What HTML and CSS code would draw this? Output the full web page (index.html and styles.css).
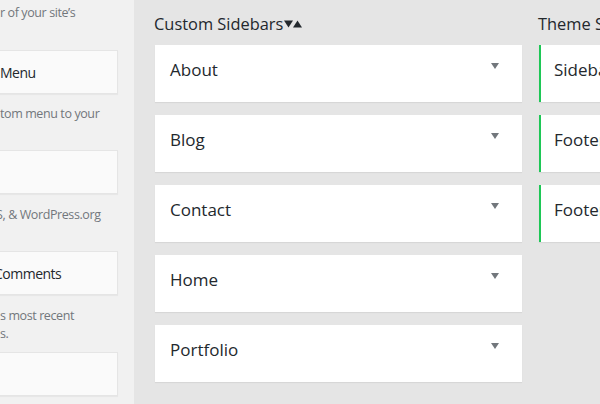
FILE: index.html
```html
<!DOCTYPE html>
<html>
<head>
<meta charset="utf-8">
<link rel="stylesheet" href="styles.css">
</head>
<body>
<div class="page">
  <aside class="avail">
    <p class="desc first">r of your site’s</p>
    <div class="wcard"><span>Menu</span></div>
    <p class="desc">tom menu to your</p>
    <div class="wcard"></div>
    <p class="desc tall"><span class="cut4">S, &amp; WordPress.org</span></p>
    <div class="wcard"><span class="cut5">Comments</span></div>
    <p class="desc tall">s most recent<br>s.</p>
    <div class="wcard"></div>
  </aside>
  <main class="main">
    <section class="col col-custom">
      <h2 class="col-title">Custom Sidebars<svg class="sort" width="18" height="8" viewBox="0 0 18 8"><path d="M0 0.5h9l-4.5 7z" fill="#23282d"/><path d="M9 7.5h9l-4.5-7z" fill="#23282d"/></svg></h2>
      <div class="sb"><span class="sb-name">About</span><span class="caret"></span></div>
      <div class="sb"><span class="sb-name">Blog</span><span class="caret"></span></div>
      <div class="sb"><span class="sb-name">Contact</span><span class="caret"></span></div>
      <div class="sb"><span class="sb-name">Home</span><span class="caret"></span></div>
      <div class="sb"><span class="sb-name">Portfolio</span><span class="caret"></span></div>
    </section>
    <section class="col col-theme">
      <h2 class="col-title">Theme Sidebars</h2>
      <div class="sb theme"><span class="sb-name">Sidebar</span></div>
      <div class="sb theme"><span class="sb-name">Footer 1</span></div>
      <div class="sb theme"><span class="sb-name">Footer 2</span></div>
    </section>
  </main>
</div>
</body>
</html>
```

FILE: styles.css
```css
html, body {
  margin: 0;
  padding: 0;
  background: #e5e5e5;
  font-family: "Open Sans", "Noto Sans", sans-serif;
  color: #23282d;
  overflow: hidden;
}
.page {
  display: flex;
  width: 600px;
  height: 404px;
  overflow: hidden;
}
.avail {
  width: 134px;
  flex: none;
  background: #f1f1f1;
  display: flex;
  flex-direction: column;
  overflow: hidden;
}
.desc {
  margin: 0;
  height: 56px;
  padding-top: 11px;
  box-sizing: border-box;
  font-size: 12.5px;
  letter-spacing: -0.4px;
  line-height: 18px;
  color: #72777c;
  white-space: nowrap;
}
.desc.tall {
  height: 57px;
  padding-top: 12px;
}
.desc.first {
  height: 50px;
  padding-top: 4px;
}
.wcard {
  width: 118px;
  height: 44px;
  box-sizing: border-box;
  flex: none;
  background: #fafafa;
  border: 1px solid #e5e5e5;
  border-left: none;
  box-shadow: 0 1px 1px rgba(0,0,0,0.04);
  display: flex;
  align-items: center;
  font-size: 14px;
  letter-spacing: -0.5px;
  color: #23282d;
  white-space: nowrap;
}
.cut4 { margin-left: -4px; }
.cut5 { margin-left: -6px; }
.main {
  flex: 1;
  display: flex;
  gap: 15px;
  padding: 12px 0 0 20px;
  overflow: hidden;
}
.col {
  flex: none;
  width: 369px;
}
.col-title {
  margin: 0 0 10px;
  font-size: 16.4px;
  font-weight: 400;
  line-height: 23px;
  white-space: nowrap;
  display: flex;
  align-items: center;
}
.sort {
  margin-left: 1px;
  margin-top: 1px;
}
.sb {
  margin: 0 0 13px 1px;
  width: 367px;
  height: 57px;
  box-sizing: border-box;
  background: #fff;
  box-shadow: 0 1px 1px rgba(0,0,0,0.06);
  display: flex;
  justify-content: space-between;
  align-items: flex-start;
  padding: 14px 23px 0 15px;
  white-space: nowrap;
}
.sb.theme {
  border-left: 2px solid #1ec756;
  padding-left: 13px;
}
.sb-name {
  font-size: 17px;
  line-height: 22px;
  color: #23282d;
}
.caret {
  width: 0;
  height: 0;
  margin-top: 4px;
  border-left: 4px solid transparent;
  border-right: 4px solid transparent;
  border-top: 6px solid #72777c;
}
```
